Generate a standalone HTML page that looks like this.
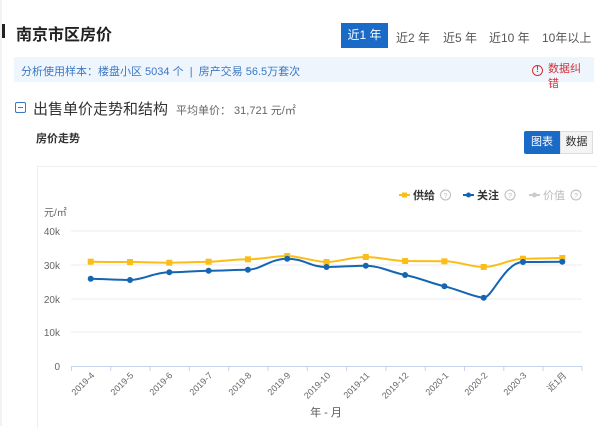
<!DOCTYPE html>
<html><head><meta charset="utf-8"><style>
*{margin:0;padding:0;box-sizing:border-box}
body{width:600px;height:426px;background:#fff;font-family:"Liberation Sans","Noto Sans CJK SC",sans-serif;position:relative;overflow:hidden;color:#333}
.a{position:absolute;white-space:nowrap}
</style></head><body>
<div class="a" style="left:0;top:0;width:2px;height:426px;background:#f2f2f2"></div>
<div class="a" style="left:2px;top:24px;width:3px;height:14px;background:#222"></div>
<div class="a" style="left:16px;top:21px;font-size:16px;color:#222;font-weight:bold">南京市区房价</div>
<div class="a" style="left:341px;top:23px;width:47px;height:25px;background:#1a6ac8;color:#fff;font-size:12px;line-height:25px;text-align:center">近1 年</div>
<div class="a" style="left:396px;top:29px;font-size:12px;color:#555">近2 年</div>
<div class="a" style="left:443px;top:29px;font-size:12px;color:#555">近5 年</div>
<div class="a" style="left:489px;top:29px;font-size:12px;color:#555">近10 年</div>
<div class="a" style="left:542px;top:29px;font-size:12px;color:#555">10年以上</div>
<div class="a" style="left:14px;top:57px;width:580px;height:25px;background:#eef5fd"></div>
<div class="a" style="left:21px;top:63px;font-size:11px;color:#3b78c4">分析使用样本：楼盘小区 5034 个 &nbsp;| &nbsp;房产交易 56.5万套次</div>
<div class="a" style="left:532px;top:65px;width:11px;height:11px;border:1.5px solid #d0323a;border-radius:50%;font-size:8px;color:#d0323a;text-align:center;line-height:8px;font-weight:bold">!</div>
<div class="a" style="left:548px;top:62px;font-size:11px;color:#d0323a;line-height:15px">数据纠<br>错</div>
<div class="a" style="left:15px;top:102px;width:11px;height:11px;border:1px solid #3b78c4;border-radius:2px"></div>
<div class="a" style="left:18px;top:107px;width:5px;height:1px;background:#3b78c4"></div>
<div class="a" style="left:33px;top:98px;font-size:15px;color:#333">出售单价走势和结构</div>
<div class="a" style="left:176px;top:102px;font-size:11px;color:#666">平均单价： 31,721 元/㎡</div>
<div class="a" style="left:36px;top:130px;font-size:11px;font-weight:bold;color:#333">房价走势</div>
<div class="a" style="left:524px;top:131px;width:36px;height:23px;background:#1a6ac8;color:#fff;font-size:11px;line-height:23px;text-align:center;border-radius:2px 0 0 2px">图表</div>
<div class="a" style="left:560px;top:131px;width:33px;height:23px;background:#f4f4f4;border:1px solid #ddd;color:#333;font-size:11px;line-height:21px;text-align:center">数据</div>
<div class="a" style="left:37px;top:166px;width:560px;height:262px;border:1px solid #eee;border-right:none;border-bottom:none"></div>
<svg class="a" style="left:0;top:0" width="600" height="426" font-family="Liberation Sans,Noto Sans CJK SC,sans-serif">
<g stroke="#eceef2" stroke-width="1">
<line x1="71" y1="231" x2="582" y2="231"/><line x1="71" y1="265" x2="582" y2="265"/><line x1="71" y1="299" x2="582" y2="299"/><line x1="71" y1="332" x2="582" y2="332"/>
</g>
<line x1="71" y1="366.5" x2="582" y2="366.5" stroke="#c8d4ee"/>
<g stroke="#c8d4ee">
<path d="M71.5 366v5M110.8 366v5M150.1 366v5M189.4 366v5M228.7 366v5M268 366v5M307.3 366v5M346.6 366v5M385.9 366v5M425.2 366v5M464.5 366v5M503.8 366v5M543.1 366v5M582 366v5"/>
</g>
<g font-size="10" fill="#666" text-anchor="end">
<text x="60" y="235">40k</text><text x="60" y="269">30k</text><text x="60" y="303">20k</text><text x="60" y="336">10k</text><text x="60" y="370">0</text>
</g>
<text x="44" y="216" font-size="10" fill="#666">元/㎡</text>
<g font-size="9" fill="#666" text-anchor="end">
<text transform="translate(95,376) rotate(-45)">2019-4</text>
<text transform="translate(134,376) rotate(-45)">2019-5</text>
<text transform="translate(173,376) rotate(-45)">2019-6</text>
<text transform="translate(213,376) rotate(-45)">2019-7</text>
<text transform="translate(252,376) rotate(-45)">2019-8</text>
<text transform="translate(291,376) rotate(-45)">2019-9</text>
<text transform="translate(331,376) rotate(-45)">2019-10</text>
<text transform="translate(370,376) rotate(-45)">2019-11</text>
<text transform="translate(409,376) rotate(-45)">2019-12</text>
<text transform="translate(449,376) rotate(-45)">2020-1</text>
<text transform="translate(488,376) rotate(-45)">2020-2</text>
<text transform="translate(527,376) rotate(-45)">2020-3</text>
<text transform="translate(567,376) rotate(-45)">近1月</text>
</g>
<text x="326" y="416" font-size="11" fill="#555" text-anchor="middle">年 - 月</text>
<path d="M90.7 261.7 C110 262,115 262,130 262 S155 262.7,169.3 262.7 S195 262,208.6 261.7 S235 259.3,247.9 259.3 S275 256,287.2 256 S315 262,326.5 262 S352 257,365.8 257 S392 261,405.1 261 S430 261.3,444.4 261.3 S470 267,483.7 267 S510 258.7,523 258.7 S550 258,562.3 258" fill="none" stroke="#fbbd18" stroke-width="2"/>
<path d="M90.7 278.7 C105 279,118 280,130 280 S155 272.3,169.3 272.3 S195 270.7,208.6 270.7 S235 269.7,247.9 269.7 S270 258.7,287.2 258.7 S310 267,326.5 267 S352 265.7,365.8 265.7 S390 272,405.1 275 S430 283,444.4 286.3 S475 297.7,483.7 297.7 S505 262,523 262 S550 261.7,562.3 261.7" fill="none" stroke="#1565b3" stroke-width="2"/>
<g fill="#fbbd18">
<rect x="87.7" y="258.7" width="6" height="6"/><rect x="127" y="259" width="6" height="6"/><rect x="166.3" y="259.7" width="6" height="6"/><rect x="205.6" y="258.7" width="6" height="6"/><rect x="244.9" y="256.3" width="6" height="6"/><rect x="284.2" y="253" width="6" height="6"/><rect x="323.5" y="259" width="6" height="6"/><rect x="362.8" y="254" width="6" height="6"/><rect x="402.1" y="258" width="6" height="6"/><rect x="441.4" y="258.3" width="6" height="6"/><rect x="480.7" y="264" width="6" height="6"/><rect x="520" y="255.7" width="6" height="6"/><rect x="559.3" y="255" width="6" height="6"/>
</g>
<g fill="#1565b3">
<circle cx="90.7" cy="278.7" r="3"/><circle cx="130" cy="280" r="3"/><circle cx="169.3" cy="272.3" r="3"/><circle cx="208.6" cy="270.7" r="3"/><circle cx="247.9" cy="269.7" r="3"/><circle cx="287.2" cy="258.7" r="3"/><circle cx="326.5" cy="267" r="3"/><circle cx="365.8" cy="265.7" r="3"/><circle cx="405.1" cy="275" r="3"/><circle cx="444.4" cy="286.3" r="3"/><circle cx="483.7" cy="297.7" r="3"/><circle cx="523" cy="262" r="3"/><circle cx="562.3" cy="261.7" r="3"/>
</g>
<g font-size="11">
<line x1="399" y1="195" x2="410" y2="195" stroke="#fbbd18" stroke-width="2"/><rect x="402" y="192.5" width="5" height="5" fill="#fbbd18"/>
<text x="413" y="199" fill="#333" font-weight="bold">供给</text>
<circle cx="445.5" cy="195" r="5" fill="none" stroke="#bbb"/><text x="445.5" y="198" font-size="7" fill="#bbb" text-anchor="middle">?</text>
<line x1="463" y1="195" x2="474" y2="195" stroke="#1565b3" stroke-width="2"/><circle cx="468.5" cy="195" r="2.5" fill="#1565b3"/>
<text x="477" y="199" fill="#333" font-weight="bold">关注</text>
<circle cx="510" cy="195" r="5" fill="none" stroke="#bbb"/><text x="510" y="198" font-size="7" fill="#bbb" text-anchor="middle">?</text>
<line x1="529" y1="195" x2="540" y2="195" stroke="#ccc" stroke-width="2"/><circle cx="534.5" cy="195" r="2.5" fill="#ccc"/>
<text x="543" y="199" fill="#bbb">价值</text>
<circle cx="576" cy="195" r="5" fill="none" stroke="#bbb"/><text x="576" y="198" font-size="7" fill="#bbb" text-anchor="middle">?</text>
</g>
</svg>
</body></html>
